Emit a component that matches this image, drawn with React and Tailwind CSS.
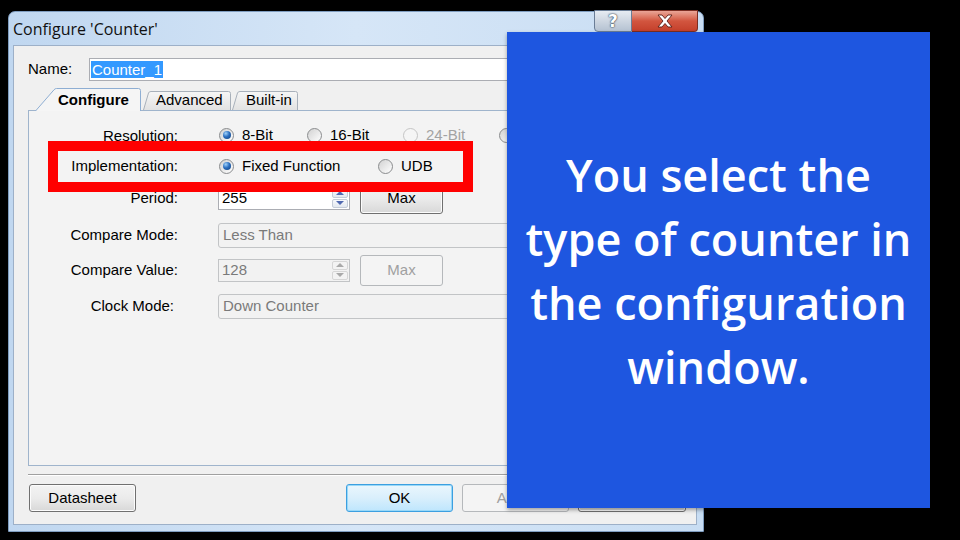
import React from "react";

function Radio({ checked, disabled }) {
  return (
    <span
      className={
        disabled
          ? "w-[15px] h-[15px] rounded-full border border-[#c5c5c5] bg-[#f5f5f5] flex items-center justify-center shrink-0"
          : "w-[15px] h-[15px] rounded-full border border-[#8a8c8e] bg-gradient-to-br from-[#d2d2d2] to-[#ffffff] flex items-center justify-center shrink-0"
      }
    >
      {checked && (
        <span className="w-[8px] h-[8px] rounded-full bg-[radial-gradient(circle_at_35%_30%,#9fd2fb_0%,#2b6fc0_45%,#0d3c78_100%)]" />
      )}
    </span>
  );
}

function Option({ label, checked, disabled, w }) {
  return (
    <div className={"flex items-center gap-[8px] " + w}>
      <Radio checked={checked} disabled={disabled} />
      <span className={disabled ? "text-[#a3a3a3]" : "text-black"}>{label}</span>
    </div>
  );
}

function Spinner({ disabled }) {
  const c = disabled ? "#a9a9a9" : "#5069b0";
  return (
    <div className="flex flex-col w-[17px] h-full py-[1px] pr-[1px] gap-[1px]">
      <div
        className={
          disabled
            ? "flex-1 flex items-center justify-center border border-[#d6d6d6] rounded-[2px] bg-[#f3f3f3]"
            : "flex-1 flex items-center justify-center border border-[#c4ccd8] rounded-[2px] bg-gradient-to-b from-[#f7f9fc] to-[#e3e8ef]"
        }
      >
        <svg width="8" height="4" viewBox="0 0 8 4">
          <path d="M0 4 L4 0 L8 4 Z" fill={c} />
        </svg>
      </div>
      <div
        className={
          disabled
            ? "flex-1 flex items-center justify-center border border-[#d6d6d6] rounded-[2px] bg-[#f3f3f3]"
            : "flex-1 flex items-center justify-center border border-[#c4ccd8] rounded-[2px] bg-gradient-to-b from-[#f7f9fc] to-[#e3e8ef]"
        }
      >
        <svg width="8" height="4" viewBox="0 0 8 4">
          <path d="M0 0 L8 0 L4 4 Z" fill={c} />
        </svg>
      </div>
    </div>
  );
}

function Button({ children, variant, size }) {
  let cls = "rounded-[3px] border flex items-center justify-center text-[15px] ";
  cls += size || "h-[28px] w-[107px]";
  cls += " ";
  if (variant === "default")
    cls +=
      "border-[#3c9fe0] bg-gradient-to-b from-[#eaf6fd] via-[#d9effc] to-[#bee6fd] shadow-[inset_0_0_0_1px_#98d8f8] text-black";
  else if (variant === "disabled")
    cls += "border-[#b5b8bb] bg-[#f4f4f4] text-[#a0a0a0]";
  else
    cls +=
      "border-[#707070] bg-gradient-to-b from-[#f3f3f3] via-[#ebebeb] to-[#d8d8d8] shadow-[inset_0_0_0_1px_#fcfcfc] text-black";
  return <div className={cls}>{children}</div>;
}

export default function App() {
  return (
    <div className="relative w-[960px] h-[540px] bg-black overflow-hidden font-['Liberation_Sans',Arial,sans-serif]">
      {/* Dialog window */}
      <div className="absolute left-[8px] top-[11px] w-[696px] h-[521px] flex flex-col rounded-t-[7px] border border-[#7f9dc0] bg-gradient-to-r from-[#c0d7f0] via-[#d6e6f7] to-[#c8ddf3]">
        {/* Title bar */}
        <div className="relative h-[33px] shrink-0 flex items-center pl-[4px]">
          <span className="text-[16px] text-[#111] font-['Open_Sans',sans-serif] mt-[1px]">
            Configure 'Counter'
          </span>
          <div className="absolute right-[5px] top-[-2px] flex">
            <div className="w-[38px] h-[22px] rounded-bl-[4px] border border-[#6a7d96] bg-gradient-to-b from-[#e6ecf3] via-[#cdd6e1] to-[#b5c2d2] flex items-center justify-center">
              <span className="text-white font-bold text-[17px] leading-none font-['DejaVu_Sans',sans-serif] [text-shadow:0_0_1px_#233247,0_0_2px_#233247]">
                ?
              </span>
            </div>
            <div className="w-[66px] h-[22px] rounded-br-[4px] border border-l-0 border-[#7a2d22] bg-gradient-to-b from-[#e9a597] via-[#d2553f] to-[#c4402b] flex items-center justify-center">
              <svg width="18" height="14" viewBox="0 0 18 14">
                <path
                  d="M2 1 L6 1 L9 4.5 L12 1 L16 1 L11 7 L16 13 L12 13 L9 9.5 L6 13 L2 13 L7 7 Z"
                  fill="#ffffff"
                  stroke="#5a1e17"
                  strokeWidth="0.9"
                  strokeLinejoin="round"
                />
              </svg>
            </div>
          </div>
        </div>

        {/* Client area */}
        <div className="flex-1 ml-[4px] mr-[6px] mb-[6px] bg-[#f0f0f0] border border-[#9db0c8] flex flex-col text-[15px] text-black">
          {/* Name row */}
          <div className="flex items-center h-[23px] mt-[12px] pl-[14px] pr-[11px]">
            <span className="w-[61px]">Name:</span>
            <div className="flex-1 h-[23px] border border-[#abadb3] bg-white flex items-center pl-[1px]">
              <span className="bg-[#3399ff] text-white px-[1px] leading-[17px]">Counter_1</span>
            </div>
          </div>

          {/* Tabs */}
          <div className="relative z-10 flex items-end h-[22px] mt-[8px] pl-[21px] -mb-[1px]">
            <div className="relative w-[106px] h-[23px] flex items-center pl-[23px]">
              <svg className="absolute inset-0" width="106" height="23" viewBox="0 0 106 23">
                <path
                  d="M0.5 23 L19 1.8 Q20 0.5 21.5 0.5 L103.5 0.5 Q105.5 0.5 105.5 2.5 L105.5 23"
                  fill="#f5f5f5"
                  stroke="#8eaed3"
                  strokeWidth="1"
                />
              </svg>
              <span className="relative font-bold text-[15px] mt-[1px]">Configure</span>
            </div>
            <div className="relative w-[88px] h-[19px] ml-[2px] mb-[1px] flex items-center pl-[13px]">
              <svg className="absolute inset-0" width="88" height="19" viewBox="0 0 88 19">
                <defs>
                  <linearGradient id="tg" x1="0" y1="0" x2="0" y2="1">
                    <stop offset="0" stopColor="#f6f6f6" />
                    <stop offset="1" stopColor="#e2e2e2" />
                  </linearGradient>
                </defs>
                <path
                  d="M0.5 19 L5.5 2 Q6 0.5 8 0.5 L85.5 0.5 Q87.5 0.5 87.5 2.5 L87.5 19"
                  fill="url(#tg)"
                  stroke="#a8b0ba"
                  strokeWidth="1"
                />
              </svg>
              <span className="relative text-[15px]">Advanced</span>
            </div>
            <div className="relative w-[66px] h-[19px] ml-[1px] mb-[1px] flex items-center pl-[14px]">
              <svg className="absolute inset-0" width="66" height="19" viewBox="0 0 66 19">
                <path
                  d="M0.5 19 L5.5 2 Q6 0.5 8 0.5 L63.5 0.5 Q65.5 0.5 65.5 2.5 L65.5 19"
                  fill="url(#tg)"
                  stroke="#a8b0ba"
                  strokeWidth="1"
                />
              </svg>
              <span className="relative text-[15px]">Built-in</span>
            </div>
          </div>

          {/* Tab panel */}
          <div className="relative h-[356px] ml-[14px] mr-[11px] border border-[#9fb4cc] bg-[#f3f3f3] pt-[9px]">
            {/* Row: Resolution */}
            <div className="flex items-center h-[30px]">
              <span className="w-[149px] text-right mt-[3px]">Resolution:</span>
              <div className="flex items-center ml-[40px] pl-[1px]">
                <Option label="8-Bit" checked w="w-[88px]" />
                <Option label="16-Bit" w="w-[96px]" />
                <Option label="24-Bit" disabled w="w-[96px]" />
                <Option label="32-Bit" w="w-[96px]" />
              </div>
            </div>
            {/* Row: Implementation */}
            <div className="flex items-center h-[32px]">
              <span className="w-[149px] text-right">Implementation:</span>
              <div className="flex items-center ml-[40px] pl-[1px]">
                <Option label="Fixed Function" checked w="w-[159px]" />
                <Option label="UDB" w="w-[80px]" />
              </div>
            </div>
            {/* Row: Period */}
            <div className="flex items-center h-[32px]">
              <span className="w-[149px] text-right">Period:</span>
              <div className="flex items-center ml-[40px] gap-[10px]">
                <div className="w-[132px] h-[23px] border border-[#abadb3] bg-white flex items-stretch">
                  <span className="flex-1 pl-[3px] leading-[20px]">255</span>
                  <Spinner />
                </div>
                <Button size="w-[83px] h-[31px]">Max</Button>
              </div>
            </div>
            {/* Row: Compare Mode */}
            <div className="flex items-center h-[42px]">
              <span className="w-[149px] text-right">Compare Mode:</span>
              <div className="ml-[40px] w-[462px] h-[25px] rounded-[3px] border border-[#c2c4c6] bg-[#f2f2f2] flex items-center pl-[4px] text-[#7a7a7a]">
                Less Than
              </div>
            </div>
            {/* Row: Compare Value */}
            <div className="flex items-center h-[28px]">
              <span className="w-[149px] text-right">Compare Value:</span>
              <div className="flex items-center ml-[40px] gap-[10px]">
                <div className="w-[132px] h-[23px] border border-[#c2c4c6] bg-[#f2f2f2] flex items-stretch">
                  <span className="flex-1 pl-[3px] leading-[20px] text-[#7a7a7a]">128</span>
                  <Spinner disabled />
                </div>
                <Button variant="disabled" size="w-[83px] h-[31px]">Max</Button>
              </div>
            </div>
            {/* Row: Clock Mode */}
            <div className="flex items-center h-[44px]">
              <span className="w-[145px] text-right mr-[4px]">Clock Mode:</span>
              <div className="ml-[40px] w-[462px] h-[25px] rounded-[3px] border border-[#c2c4c6] bg-[#f2f2f2] flex items-center pl-[4px] text-[#7a7a7a]">
                Down Counter
              </div>
            </div>

            {/* Red highlight annotation */}
            <div className="absolute z-20 left-[19px] top-[30px] w-[425px] h-[51px] border-[10px] border-[#ff0000]" />
          </div>

          {/* Separator */}
          <div className="mt-[8px] ml-[14px] mr-[11px] h-[2px] border-t border-[#a0a0a0] border-b border-b-white" />

          {/* Bottom buttons */}
          <div className="flex items-center h-[28px] mt-[8px] pl-[15px] pr-[10px] gap-[9px]">
            <Button>Datasheet</Button>
            <div className="flex-1" />
            <Button variant="default">OK</Button>
            <Button variant="disabled">Apply</Button>
            <Button size="h-[28px] w-[108px]">Cancel</Button>
          </div>
        </div>
      </div>

      {/* Blue caption card */}
      <div className="absolute left-[507px] top-[32px] w-[423px] h-[476px] bg-[#1e56e0] shadow-[0_2px_4px_rgba(0,0,0,0.35)] flex items-center justify-center">
        <p className="text-white text-center font-semibold text-[45px] leading-[64px] font-['Open_Sans',sans-serif] mt-[2px] whitespace-nowrap">
          You select the
          <br />
          type of counter in
          <br />
          the configuration
          <br />
          window.
        </p>
      </div>
    </div>
  );
}
